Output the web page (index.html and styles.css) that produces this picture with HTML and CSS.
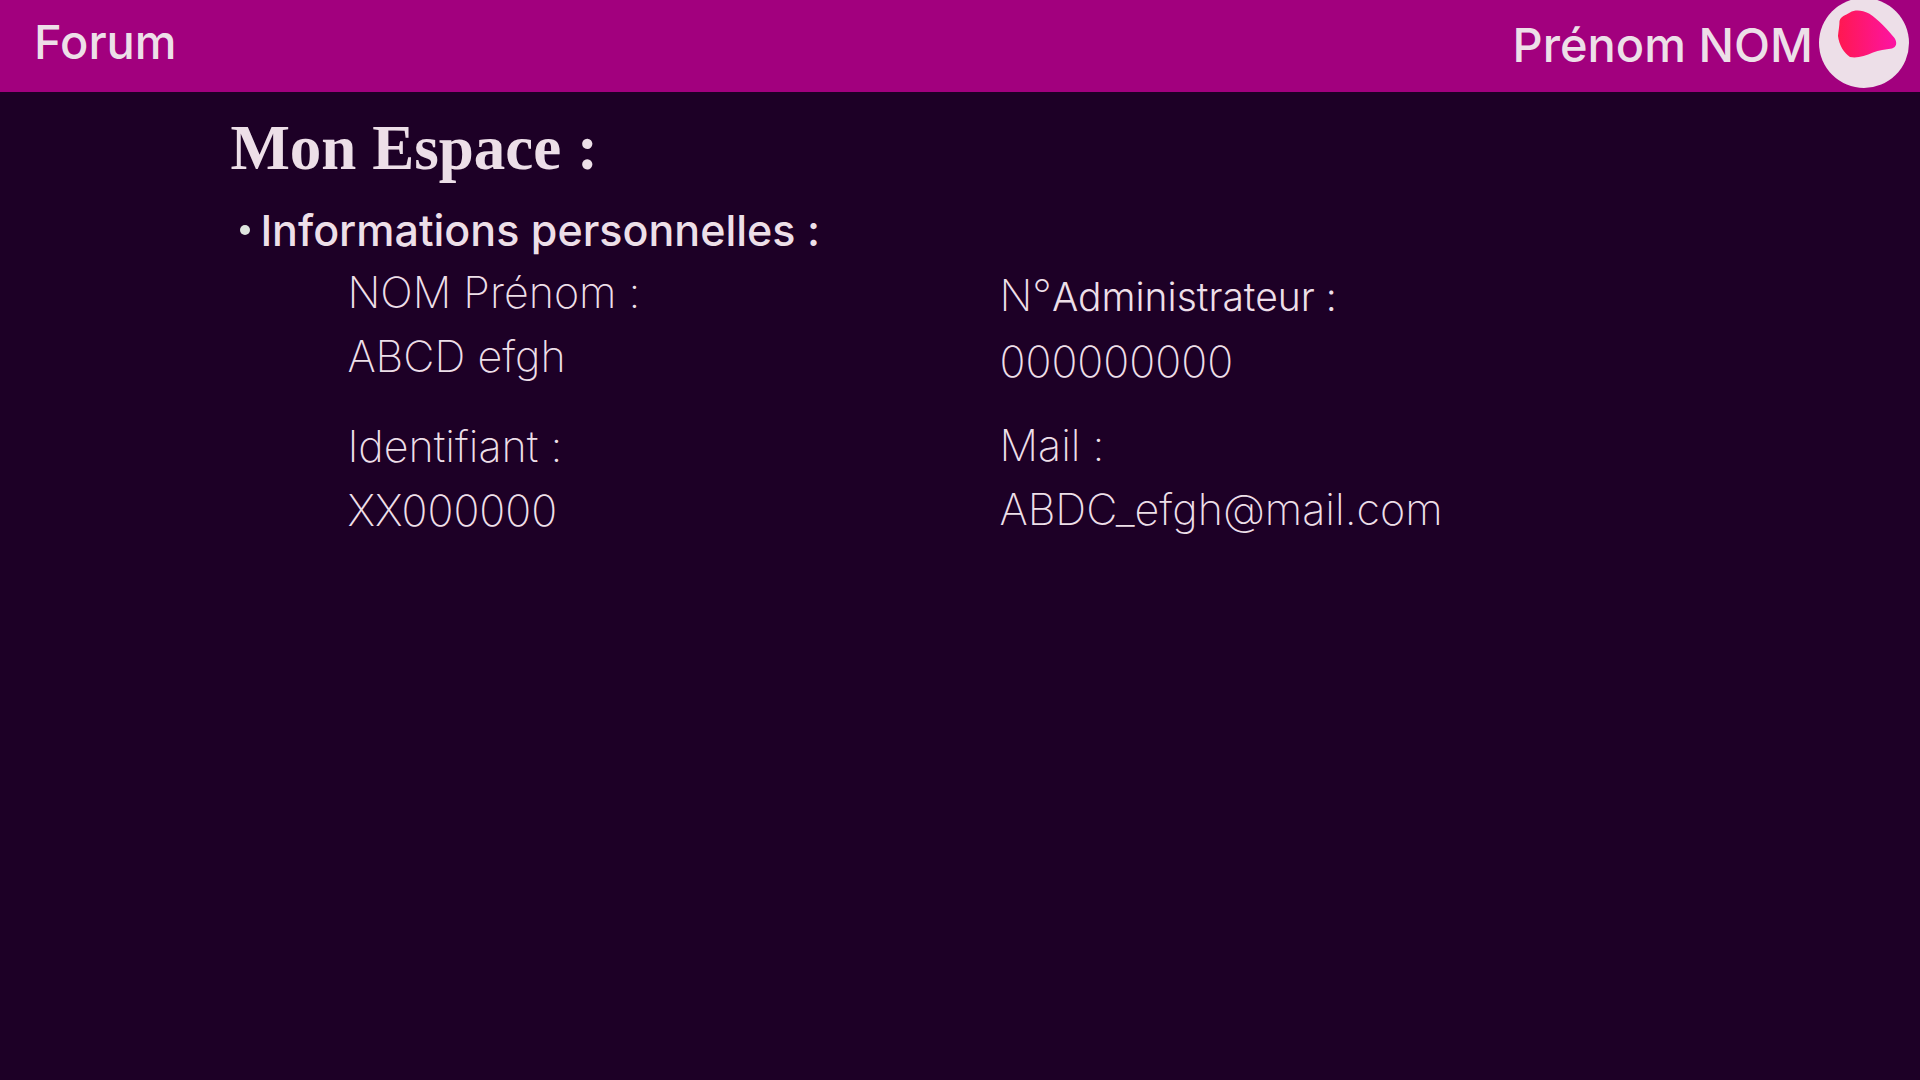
FILE: index.html
```html
<!DOCTYPE html>
<html lang="fr">
<head>
<meta charset="utf-8">
<meta name="viewport" content="width=device-width, initial-scale=1">
<title>Mon Espace</title>
<link rel="stylesheet" href="styles.css">
</head>
<body>
<header class="topbar">
  <a class="forum" href="#">Forum</a>
  <a class="account" href="#">
    <span class="account-name">Prénom NOM</span>
    <svg class="avatar" viewBox="0 0 90 90" aria-hidden="true">
      <defs>
        <linearGradient id="blob" x1="0" y1="0" x2="1" y2="0">
          <stop offset="0" stop-color="#ff1850"/>
          <stop offset="1" stop-color="#fc14a4"/>
        </linearGradient>
      </defs>
      <circle cx="45" cy="45" r="45" fill="#eddfe8"/>
      <path d="M31 14.500 C36 11.500 43 12 50 15.500 C60 22 69 32 75.500 40 C78.500 45 77.500 49 73 50.500 C66 51.500 60 52 54 54.500 C46 58 38 60.500 31 59 C25 55 20 47 19 38 C19.500 32 20.500 28 20.500 23 C22 18 26 17.500 31 14.500 Z" fill="url(#blob)"/>
    </svg>
  </a>
</header>
<main class="space">
  <h1 class="title">Mon Espace :</h1>
  <section>
    <h2 class="section-title">Informations personnelles :</h2>
    <div class="details">
      <dl class="column">
        <div><dt>NOM Prénom :</dt><dd>ABCD efgh</dd></div>
        <div><dt>Identifiant :</dt><dd>XX000000</dd></div>
      </dl>
      <dl class="column column-right">
        <div><dt>N°<span class="role">Administrateur :</span></dt><dd>000000000</dd></div>
        <div><dt>Mail :</dt><dd>ABDC_efgh@mail.com</dd></div>
      </dl>
    </div>
  </section>
</main>
</body>
</html>
```
FILE: styles.css
```css
* { box-sizing: border-box; }
body {
  margin: 0;
  min-height: 100vh;
  background: #1d0026;
  color: #eddfe8;
  font-family: Inter, "Open Sans", sans-serif;
}
h1, h2, dl, dd { margin: 0; }
.topbar {
  display: flex;
  justify-content: space-between;
  height: 92px;
  padding: 0 11px 0 34px;
  background: #a2007e;
  font-size: 47px;
  font-weight: 500;
}
.topbar a { color: inherit; text-decoration: none; }
.forum { line-height: 84px; }
.account { display: flex; gap: 6px; line-height: 90px; }
.avatar { width: 90px; height: 90px; margin-top: -2px; }
.space { padding: 16px 0 0 12%; }
.title {
  font: bold 63px/80px "Liberation Serif", serif;
}
.section-title {
  display: flex;
  align-items: center;
  gap: 10px;
  padding-left: 10px;
  font-size: 43px;
  font-weight: 500;
  line-height: 84px;
}
.section-title::before {
  content: "";
  width: 10px;
  height: 10px;
  border-radius: 50%;
  background: #dfe5df;
}
.details {
  display: grid;
  grid-template-columns: 17fr 24fr;
  padding-left: 117px;
  font-size: 43px;
  font-weight: 200;
  line-height: 64px;
  margin-top: -12px;
}
.column { display: flex; flex-direction: column; gap: 26px; }
.column-right { gap: 20px; padding-top: 3px; }
.role { font-size: 39px; font-weight: 300; }
```
